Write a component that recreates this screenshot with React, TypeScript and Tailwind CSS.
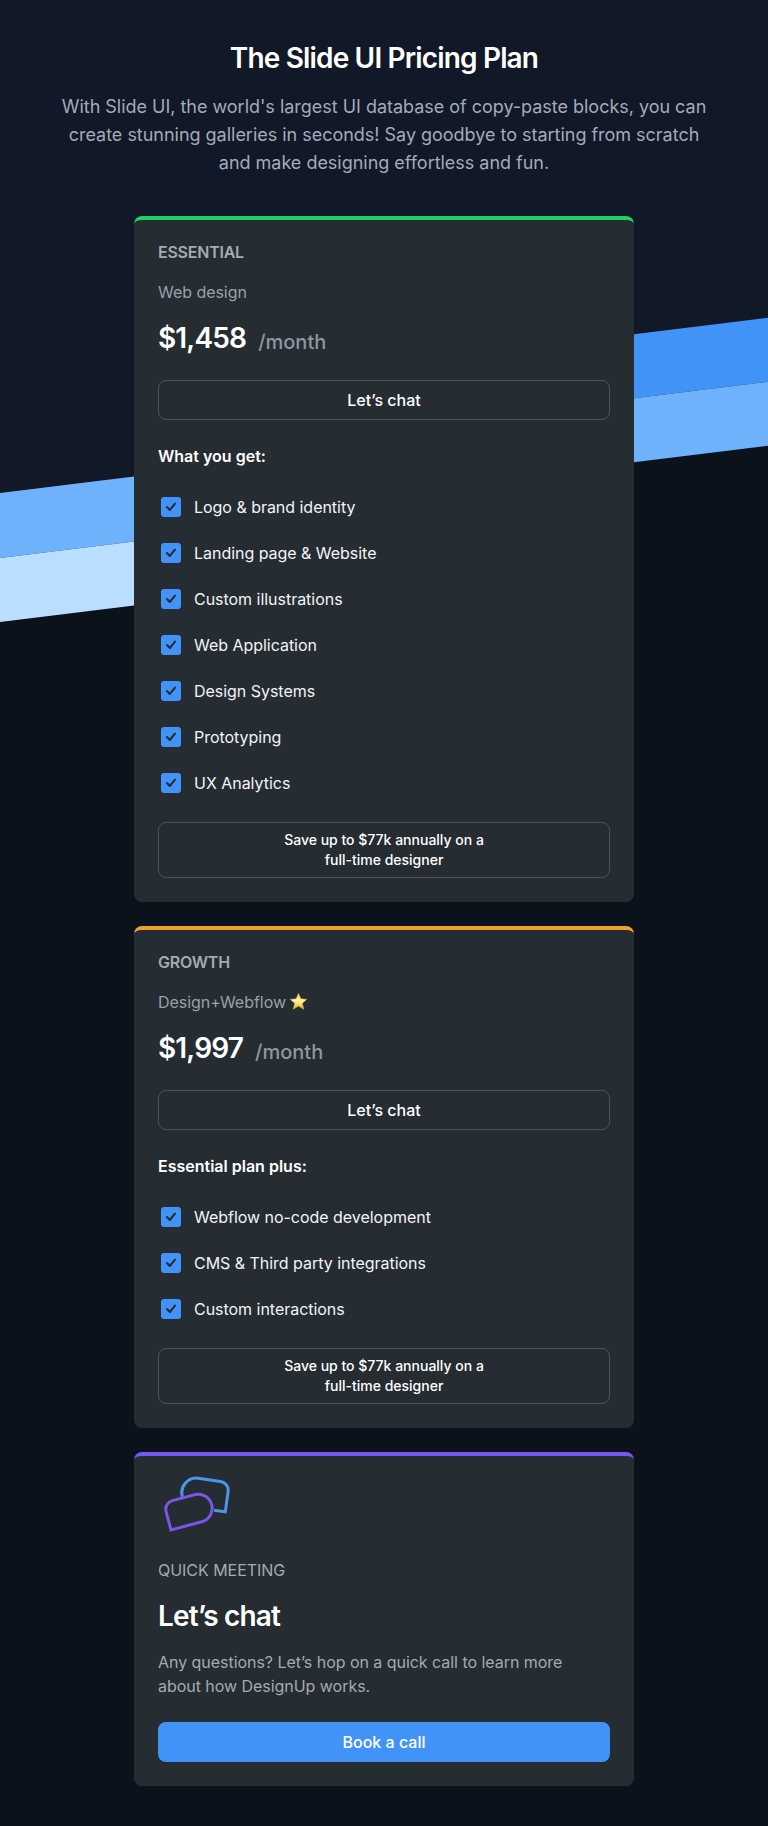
import React from "react";

type Plan = {
  name: string;
  subtitle: string;
  starred?: boolean;
  price: string;
  heading: string;
  features: string[];
  accent: string;
};

const plans: Plan[] = [
  {
    name: "ESSENTIAL",
    subtitle: "Web design",
    price: "$1,458",
    heading: "What you get:",
    features: [
      "Logo & brand identity",
      "Landing page & Website",
      "Custom illustrations",
      "Web Application",
      "Design Systems",
      "Prototyping",
      "UX Analytics",
    ],
    accent: "border-[#22cc66]",
  },
  {
    name: "GROWTH",
    subtitle: "Design+Webflow",
    starred: true,
    price: "$1,997",
    heading: "Essential plan plus:",
    features: [
      "Webflow no-code development",
      "CMS & Third party integrations",
      "Custom interactions",
    ],
    accent: "border-[#f0a030]",
  },
];

function Star() {
  return (
    <svg viewBox="0 0 16 16" className="ml-[4px] h-[17px] w-[17px] -translate-y-px">
      <defs>
        <linearGradient id="star" x1="0" y1="0" x2="0" y2="1">
          <stop offset="0" stopColor="#f5c53c" />
          <stop offset="0.4" stopColor="#fff3a8" />
          <stop offset="0.65" stopColor="#fbe07a" />
          <stop offset="1" stopColor="#e9a51c" />
        </linearGradient>
      </defs>
      <path
        d="M8 .4 10.2 5.5 15.7 6 11.5 9.7 13 15.2 8 12.3 3 15.2 4.5 9.7.3 6l5.5-.5Z"
        fill="url(#star)"
        stroke="#f0bd38"
        strokeWidth=".5"
        strokeLinejoin="round"
      />
    </svg>
  );
}

function Checkbox() {
  return (
    <svg viewBox="0 0 20 20" className="ml-[3px] h-5 w-5 shrink-0">
      <rect width="20" height="20" rx="3" fill="#4193f7" />
      <path
        d="m6 10 2.8 3L14 6.6"
        fill="none"
        stroke="#252c32"
        strokeWidth="2"
        strokeLinecap="round"
        strokeLinejoin="round"
      />
    </svg>
  );
}

function ChatIcon() {
  return (
    <svg viewBox="0 0 76 64" className="block h-16 w-[76px]" fill="none" strokeWidth="3">
      <path
        d="M56 34.2 67.3 35.8 70.1 15.6A9 9 0 0 0 62.5 5.4L40.2 2.2A14.7 14.7 0 0 0 24.6 21.5"
        stroke="#4a96e8"
      />
      <path
        d="M13 54 8.1 35.6A9 9 0 0 1 14.4 24.6L37.4 18.5A14 14 0 0 1 44.6 45.5Z"
        stroke="#7856e8"
      />
    </svg>
  );
}

function PlanCard({ plan }: { plan: Plan }) {
  return (
    <section className={`rounded-lg border-t-4 bg-[#252c32] px-6 pt-5 pb-6 ${plan.accent}`}>
      <h2 className="text-base leading-6 font-semibold tracking-[-0.015em] text-[#a3abb3]">{plan.name}</h2>
      <p className="mt-4 flex h-6 items-center text-base leading-6 tracking-[-0.04px] text-[#99a1aa]">
        {plan.subtitle}
        {plan.starred && <Star />}
      </p>
      <div className="mt-[18px] flex h-8 items-baseline gap-3 leading-8">
        <span className="text-[28px] font-semibold tracking-[-0.03em] text-white">{plan.price}</span>
        <span className="relative top-px text-xl leading-8 font-medium text-[#8f97a0]">/month</span>
      </div>
      <button className="mt-[26px] block h-10 w-full rounded-lg border border-[#4b545c] text-base font-medium text-white">
        Let’s chat
      </button>
      <h3 className="mt-6 text-base leading-6 font-semibold text-white">{plan.heading}</h3>
      <ul className="mt-4">
        {plan.features.map((feature) => (
          <li
            key={feature}
            className="flex h-[46px] items-center gap-[13px] text-base tracking-[-0.03px] text-[#f2f4f6]"
          >
            <Checkbox />
            {feature}
          </li>
        ))}
      </ul>
      <div className="mt-4 h-14 rounded-lg border border-[#4b545c] py-[7px] text-center text-sm leading-5 font-medium text-white">
        Save up to $77k annually on a
        <br />
        full-time designer
      </div>
    </section>
  );
}

function Backdrop() {
  return (
    <div className="absolute inset-0 grid grid-cols-2 overflow-hidden bg-[#0c121c]">
      <div className="relative overflow-hidden">
        <div className="absolute inset-x-0 -top-[200px] flex h-[821.7px] origin-bottom-left -skew-y-[7deg] flex-col bg-[#111827]">
          <div className="mt-auto h-[64.2px] bg-[#6db2fb]" />
          <div className="h-[64.2px] bg-[#badeff]" />
        </div>
      </div>
      <div className="relative overflow-hidden">
        <div className="absolute inset-x-0 -top-[200px] flex h-[693px] origin-bottom-left -skew-y-[7deg] flex-col bg-[#111827]">
          <div className="mt-auto h-[64.2px] bg-[#4193f7]" />
          <div className="h-[64.2px] bg-[#6db2fb]" />
        </div>
      </div>
    </div>
  );
}

export default function App() {
  return (
    <div className="relative min-h-[1826px] w-full bg-[#0c121c] font-['Inter',sans-serif]">
      <Backdrop />
      <main className="relative flex flex-col items-center pb-10">
        <header className="pt-10 text-center">
          <h1 className="text-[28px] leading-9 font-semibold tracking-[-0.03em] text-white">
            The Slide UI Pricing Plan
          </h1>
          <p className="mt-[17px] text-lg leading-7 tracking-[-0.02px] text-[#a3abb8]">
            With Slide UI, the world's largest UI database of copy-paste blocks, you can
            <br />
            create stunning galleries in seconds! Say goodbye to starting from scratch
            <br />
            and make designing effortless and fun.
          </p>
        </header>
        <div className="mt-[39px] flex w-[500px] flex-col gap-6">
          {plans.map((plan) => (
            <PlanCard key={plan.name} plan={plan} />
          ))}
          <section className="rounded-lg border-t-4 border-[#7856f0] bg-[#252c32] px-6 pt-5 pb-6">
            <ChatIcon />
            <p className="mt-[18px] text-base leading-6 tracking-[-0.04px] text-[#a3abb3]">QUICK MEETING</p>
            <h2 className="mt-[18px] text-[28px] leading-8 font-semibold tracking-[-0.03em] text-white">
              Let’s chat
            </h2>
            <p className="mt-[18px] text-base leading-6 tracking-[-0.04px] text-[#a3abb3]">
              Any questions? Let’s hop on a quick call to learn more
              <br />
              about how DesignUp works.
            </p>
            <button className="mt-6 block h-10 w-full rounded-lg bg-[#4193f7] text-base font-medium text-white">
              Book a call
            </button>
          </section>
        </div>
      </main>
    </div>
  );
}
